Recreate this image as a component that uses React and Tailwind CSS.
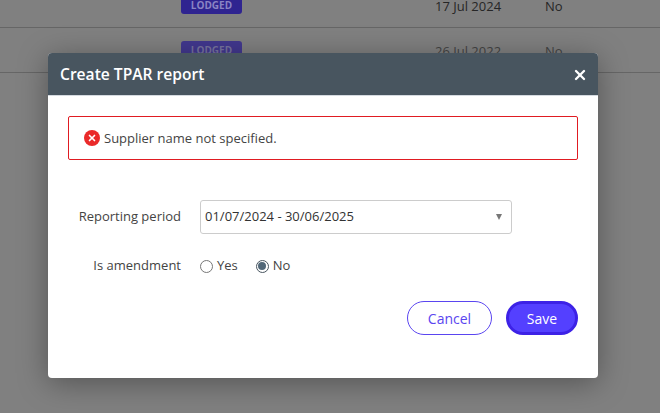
import { X } from "lucide-react";

const font = { fontFamily: '"Open Sans", sans-serif' };

function BackgroundRow({ date, faded }) {
  return (
    <div className="flex h-[45px] items-start border-b border-[#666666] pt-[13px]">
      <span className={`ml-[181px] flex h-[18px] w-[61px] items-center justify-center rounded-[3px] text-[10px] font-bold ${faded ? "bg-[#42388f] text-[#77739f]" : "bg-[#2f2490] text-[#8a84c4]"}`}>
        LODGED
      </span>
      <span className={`ml-[193px] mt-[1px] w-[110px] text-[13px] leading-[18px] ${faded ? "text-[#444444]" : "text-[#262626]"}`}>{date}</span>
      <span className={`mt-[1px] text-[13px] leading-[18px] ${faded ? "text-[#444444]" : "text-[#262626]"}`}>No</span>
    </div>
  );
}

export default function App() {
  return (
    <div style={font} className="relative h-[413px] w-[660px] overflow-hidden bg-[#808080]">
      <div className="-mt-[17px]">
        <BackgroundRow date="17 Jul 2024" />
        <BackgroundRow date="26 Jul 2022" faded />
      </div>

      <div className="absolute left-[48px] top-[53px] h-[325px] w-[550px] overflow-hidden rounded-[4px] bg-white shadow-[0_5px_30px_rgba(0,0,0,0.35)]">
        <div className="flex h-[43px] items-center justify-between border-b border-[#d5dae0] bg-[#48555f] pl-[12px] pr-[10px] pt-[1px]">
          <h2 className="text-[15.6px] font-semibold text-white">Create TPAR report</h2>
          <X className="h-[16px] w-[16px] text-white" strokeWidth={3.5} />
        </div>

        <div className="px-[20px] pt-[20px]">
          <div className="flex h-[44px] items-center rounded-[2px] border border-[#e01b22] pl-[15px]">
            <span className="flex h-[16px] w-[16px] items-center justify-center rounded-full bg-[#ea2a2a]">
              <X className="h-[10px] w-[10px] text-white" strokeWidth={4} />
            </span>
            <span className="ml-[4px] mt-[1px] text-[13px] text-[#444444]">Supplier name not specified.</span>
          </div>

          <div className="mt-[40px] flex items-center">
            <label className="w-[113px] text-right text-[13px] text-[#444444]">Reporting period</label>
            <div className="ml-[19px] flex h-[34px] w-[312px] items-center justify-between rounded-[3px] border border-[#cccccc] pl-[4px] pr-[9px] text-[13px] text-[#333333]">
              01/07/2024 - 30/06/2025
              <span className="h-0 w-0 border-x-[3.5px] border-t-[6px] border-x-transparent border-t-[#777777]" />
            </div>
          </div>

          <div className="mt-[22px] flex h-[20px] items-center">
            <label className="w-[113px] text-right text-[13px] text-[#444444]">Is amendment</label>
            <div className="ml-[19px] flex items-center text-[13px] text-[#444444]">
              <span className="h-[13px] w-[13px] rounded-full border border-[#777777]" />
              <span className="ml-[4px]">Yes</span>
              <span className="ml-[18px] flex h-[13px] w-[13px] items-center justify-center rounded-full border border-[#48555f]">
                <span className="h-[8px] w-[8px] rounded-full bg-[#526879]" />
              </span>
              <span className="ml-[4px]">No</span>
            </div>
          </div>

          <div className="mt-[25px] flex justify-end gap-[14px]">
            <button type="button" className="h-[34px] w-[85px] rounded-full border border-[#5a45f0] bg-white text-[14px] text-[#5a45f0]">
              Cancel
            </button>
            <button type="button" className="h-[34px] w-[72px] rounded-full border-[3px] border-[#3d22e6] bg-[#5440ff] text-[14px] font-medium text-white">
              Save
            </button>
          </div>
        </div>
      </div>
    </div>
  );
}
